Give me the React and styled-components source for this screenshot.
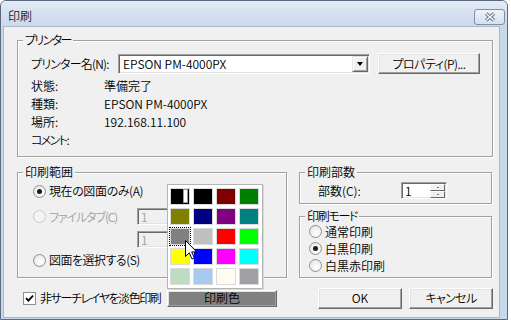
import styled, { createGlobalStyle } from "styled-components";

const GlobalStyle = createGlobalStyle`
  html, body { margin: 0; padding: 0; background: #ffffff; }
  body {
    font-family: "Noto Sans CJK JP", "Liberation Sans", sans-serif;
    font-size: 12px;
    font-weight: 350;
    line-height: 14px;
    color: #000;
    font-feature-settings: "palt";
  }
  button { font: inherit; font-feature-settings: "palt"; }
`;

const Screen = styled.div`
  width: 511px;
  height: 320px;
  overflow: hidden;
  background: #ffffff;
`;

const Window = styled.div`
  width: 508px;
  height: 320px;
  box-sizing: border-box;
  border: 1px solid #5b6a80;
  border-radius: 6px 6px 0 0;
  background: #c9d8eb;
  display: flex;
  flex-direction: column;
  overflow: hidden;
`;

const TitleBar = styled.div`
  height: 26px;
  flex-shrink: 0;
  display: flex;
  align-items: flex-start;
  justify-content: space-between;
  padding: 0 2px 0 7px;
  background: linear-gradient(#e3ebf5, #d4e0ef 55%, #c9d8eb);
`;

const Title = styled.div`
  margin-top: 8px;
  color: #1b1b1b;
`;

const CloseButton = styled.div`
  margin-top: 8px;
  width: 31px;
  height: 16px;
  box-sizing: border-box;
  border: 1px solid #7e8ea5;
  border-radius: 3px;
  background: linear-gradient(#eef3f9, #d5e0ed);
  display: flex;
  align-items: center;
  justify-content: center;
`;

const Frame = styled.div`
  flex: 1;
  display: flex;
  padding: 0 9px 2px 3px;
`;

const Client = styled.div`
  position: relative;
  flex: 1;
  background: #f0f0f0;
  padding: 13px 6px 0 13px;
  display: flex;
  flex-direction: column;
  box-shadow: 0 0 0 1px #aab8ca;
`;

const Group = styled.div`
  position: relative;
  box-sizing: border-box;
  height: ${(p) => p.$h}px;
  border: 1px solid #a0a0a0;
  box-shadow: inset 1px 1px 0 #fff, 1px 1px 0 #fff;
  padding: ${(p) => p.$pad};
  margin-top: ${(p) => p.$mt || 0}px;
  width: ${(p) => (p.$w ? `${p.$w}px` : "auto")};
  flex-shrink: 0;
`;

const Legend = styled.span`
  position: absolute;
  top: -8px;
  left: 5px;
  padding: 0 2px;
  background: #f0f0f0;
  line-height: 14px;
  letter-spacing: ${(p) => p.$ls || 0}px;
`;

const Text = styled.span`
  white-space: nowrap;
  letter-spacing: ${(p) => p.$ls || 0}px;
`;

const Row = styled.div`
  display: flex;
  align-items: center;
  height: ${(p) => p.$h || 17}px;
  margin-top: ${(p) => p.$mt || 0}px;
`;

const Label = styled.span`
  width: ${(p) => p.$w}px;
  flex-shrink: 0;
  white-space: nowrap;
  letter-spacing: ${(p) => p.$ls || 0}px;
`;

const Combo = styled.div`
  width: 252px;
  height: 20px;
  box-sizing: border-box;
  background: #fff;
  border: 1px solid;
  border-color: #a0a0a0 #fff #fff #a0a0a0;
  box-shadow: inset 1px 1px 0 #696969, inset -1px -1px 0 #e3e3e3;
  display: flex;
  align-items: center;
  justify-content: space-between;
  padding: 0 1px 0 4px;
`;

const DropButton = styled.span`
  width: 16px;
  height: 16px;
  box-sizing: border-box;
  background: #f0f0f0;
  border: 1px solid;
  border-color: #e3e3e3 #696969 #696969 #e3e3e3;
  box-shadow: inset 1px 1px 0 #fff, inset -1px -1px 0 #a0a0a0;
  display: flex;
  align-items: center;
  justify-content: center;
`;

const Arrow = styled.span`
  width: 0;
  height: 0;
  border-left: ${(p) => p.$s || 3.5}px solid transparent;
  border-right: ${(p) => p.$s || 3.5}px solid transparent;
  border-top: ${(p) => p.$s || 4}px solid #000;
  transform: ${(p) => (p.$up ? "rotate(180deg)" : "none")};
`;

const Button = styled.button`
  width: ${(p) => p.$w}px;
  height: ${(p) => p.$h || 21}px;
  margin-left: ${(p) => p.$ml || 0}px;
  flex-shrink: 0;
  box-sizing: border-box;
  padding: 0;
  color: #000;
  letter-spacing: ${(p) => p.$ls || 0}px;
  background: ${(p) => p.$bg || "#f0f0f0"};
  border: 1px solid;
  border-color: #fff #696969 #696969 #fff;
  box-shadow: inset -1px -1px 0 #a0a0a0, inset 1px 1px 0 #e3e3e3;
`;

const InfoGrid = styled.div`
  display: grid;
  grid-template-columns: 73px auto;
  grid-auto-rows: 18px;
  align-items: center;
  margin-top: 3px;
`;

const Lower = styled.div`
  display: flex;
  align-items: flex-start;
  margin-top: 15px;
`;

const RightColumn = styled.div`
  display: flex;
  flex-direction: column;
  margin-left: 12px;
  width: 193px;
`;

const RadioItem = styled.label`
  display: flex;
  align-items: center;
  width: ${(p) => (p.$w ? `${p.$w}px` : "auto")};
  flex-shrink: 0;
  white-space: nowrap;
  letter-spacing: ${(p) => p.$ls || 0}px;
  color: ${(p) => (p.$disabled ? "#a0a0a0" : "#000")};
`;

const RadioCircle = styled.span`
  width: 13px;
  height: 13px;
  box-sizing: border-box;
  border-radius: 50%;
  border: 1px solid ${(p) => (p.$disabled ? "#cacaca" : "#8e8f8f")};
  background: ${(p) =>
    p.$disabled ? "#f4f4f4" : "radial-gradient(circle at 60% 65%, #ffffff, #e2e2e2)"};
  margin-right: 3px;
  display: flex;
  align-items: center;
  justify-content: center;
  flex-shrink: 0;
  &::after {
    content: "";
    width: 5px;
    height: 5px;
    border-radius: 50%;
    background: #1a1a1a;
    display: ${(p) => (p.$checked ? "block" : "none")};
  }
`;

const Field = styled.div`
  width: ${(p) => p.$w}px;
  height: 17px;
  margin-left: ${(p) => p.$ml || 0}px;
  box-sizing: border-box;
  background: ${(p) => (p.$disabled ? "#f0f0f0" : "#fff")};
  color: ${(p) => (p.$disabled ? "#a0a0a0" : "#000")};
  border: 1px solid;
  border-color: #a0a0a0 #fff #fff #a0a0a0;
  box-shadow: inset 1px 1px 0 #696969, inset -1px -1px 0 #e3e3e3;
  display: flex;
  align-items: center;
  justify-content: space-between;
  padding: 0 1px 0 3px;
  flex-shrink: 0;
`;

const SpinStack = styled.div`
  display: flex;
  flex-direction: column;
  width: 15px;
  height: 14px;
`;

const SpinButton = styled.span`
  flex: 1;
  box-sizing: border-box;
  background: #f0f0f0;
  border: 1px solid;
  border-color: #fff #696969 #696969 #fff;
  display: flex;
  align-items: center;
  justify-content: center;
`;

const BottomRow = styled.div`
  display: flex;
  align-items: center;
  height: 20px;
  margin-top: 10px;
`;

const CheckArea = styled.label`
  display: flex;
  align-items: center;
  width: 150px;
  padding-left: 6px;
  box-sizing: border-box;
  flex-shrink: 0;
  white-space: nowrap;
  letter-spacing: -1.4px;
`;

const CheckBox = styled.span`
  width: 13px;
  height: 13px;
  box-sizing: border-box;
  border: 1px solid #8e8f8f;
  background: #fff;
  margin-right: 4px;
  display: flex;
  align-items: center;
  justify-content: center;
`;

const Palette = styled.div`
  position: absolute;
  left: 163px;
  top: 157px;
  width: 96px;
  height: 105px;
  box-sizing: border-box;
  background: #fff;
  border: 1px solid #b4b4b4;
  box-shadow: 1px 1px 0 #d8d8d8;
  padding: 3px 2px;
  display: grid;
  grid-template-columns: repeat(4, 20px);
  grid-auto-rows: 17px;
  gap: 3px;
`;

const Swatch = styled.span`
  position: relative;
  box-sizing: border-box;
  border: 1px solid #dadada;
  background: ${(p) => p.$c};
  outline: ${(p) => (p.$focus ? "1px dotted #000" : "none")};
  outline-offset: 0;
`;

const SwatchMark = styled.span`
  position: absolute;
  right: 1px;
  top: 0;
  width: 5px;
  height: 14px;
  box-sizing: border-box;
  background: #fff;
  border: 1px solid #9a9a9a;
`;

const Pointer = styled.svg`
  position: absolute;
  left: 181px;
  top: 213px;
`;

const colors = [
  "#000000", "#000000", "#800000", "#008000",
  "#808000", "#000080", "#800080", "#008080",
  "#808080", "#c0c0c0", "#ff0000", "#00ff00",
  "#ffff00", "#0000ff", "#ff00ff", "#00ffff",
  "#c0dcc0", "#a6caf0", "#fffbf0", "#a0a0a4",
];

const Radio = ({ checked, disabled, width, ls, children }) => (
  <RadioItem $w={width} $ls={ls} $disabled={disabled}>
    <RadioCircle $checked={checked} $disabled={disabled} />
    {children}
  </RadioItem>
);

export default function App() {
  return (
    <Screen>
      <GlobalStyle />
      <Window>
        <TitleBar>
          <Title>印刷</Title>
          <CloseButton>
            <svg width="12" height="10" viewBox="0 0 12 10">
              <path d="M2 1.5 L10 8.5 M10 1.5 L2 8.5" stroke="#66758b" strokeWidth="3.6" />
              <path d="M2 1.5 L10 8.5 M10 1.5 L2 8.5" stroke="#f5f7fa" strokeWidth="1.6" />
            </svg>
          </CloseButton>
        </TitleBar>
        <Frame>
          <Client>
            <Group $h={117} $pad="12px 0 0 13px">
              <Legend $ls={-1.6}>プリンター</Legend>
              <Row $h={21}>
                <Label $w={87} $ls={-0.8}>プリンター名(N):</Label>
                <Combo>
                  <span>EPSON PM-4000PX</span>
                  <DropButton>
                    <Arrow />
                  </DropButton>
                </Combo>
                <Button $w={102} $ml={8} $ls={-0.5}>プロパティ(P)...</Button>
              </Row>
              <InfoGrid>
                <Text>状態:</Text>
                <Text>準備完了</Text>
                <Text>種類:</Text>
                <Text>EPSON PM-4000PX</Text>
                <Text>場所:</Text>
                <Text>192.168.11.100</Text>
                <Text $ls={-1.6}>コメント:</Text>
                <span />
              </InfoGrid>
            </Group>

            <Lower>
              <Group $w={270} $h={106} $pad="9px 0 0 15px">
                <Legend>印刷範囲</Legend>
                <Row $h={18}>
                  <Radio checked ls={-0.4}>現在の図面のみ(A)</Radio>
                </Row>
                <Row $mt={8}>
                  <Radio disabled width={104} ls={-1.1}>ファイルタブ(C)</Radio>
                  <Field $w={48} $disabled>1</Field>
                </Row>
                <Row $mt={6}>
                  <Field $w={48} $ml={104} $disabled>1</Field>
                </Row>
                <Row $h={18} $mt={3}>
                  <Radio ls={-0.5}>図面を選択する(S)</Radio>
                </Row>
              </Group>

              <RightColumn>
                <Group $h={32} $pad="9px 0 0 18px">
                  <Legend>印刷部数</Legend>
                  <Row>
                    <Label $w={83}>部数(C):</Label>
                    <Field $w={46}>
                      <span>1</span>
                      <SpinStack>
                        <SpinButton>
                          <Arrow $s={1.5} $up />
                        </SpinButton>
                        <SpinButton>
                          <Arrow $s={1.5} />
                        </SpinButton>
                      </SpinStack>
                    </Field>
                  </Row>
                </Group>
                <Group $h={62} $mt={12} $pad="6px 0 0 9px">
                  <Legend $ls={-1.3}>印刷モード</Legend>
                  <Row>
                    <Radio>通常印刷</Radio>
                  </Row>
                  <Row>
                    <Radio checked>白黒印刷</Radio>
                  </Row>
                  <Row>
                    <Radio>白黒赤印刷</Radio>
                  </Row>
                </Group>
              </RightColumn>
            </Lower>

            <BottomRow>
              <CheckArea>
                <CheckBox>
                  <svg width="9" height="9" viewBox="0 0 9 9">
                    <path d="M1 4.2 L3.4 6.6 L8 1.6" stroke="#000" strokeWidth="1.8" fill="none" />
                  </svg>
                </CheckBox>
                非サーチレイヤを淡色印刷
              </CheckArea>
              <Button $w={110} $h={17} $bg="#808080">印刷色</Button>
              <Button $w={84} $ml={41}>OK</Button>
              <Button $w={84} $ml={7} $ls={-0.6}>キャンセル</Button>
            </BottomRow>

            <Palette>
              {colors.map((c, i) => (
                <Swatch key={i} $c={c} $focus={i === 8}>
                  {i === 0 && <SwatchMark />}
                </Swatch>
              ))}
            </Palette>

            <Pointer width="13" height="21" viewBox="0 0 13 21">
              <path
                d="M0.5 0.5 L0.5 16.5 L4.3 12.8 L7 19 L9.3 18 L6.7 11.9 L11.7 11.9 Z"
                fill="#fff"
                stroke="#000"
                strokeWidth="1"
                strokeLinejoin="miter"
              />
            </Pointer>
          </Client>
        </Frame>
      </Window>
    </Screen>
  );
}
